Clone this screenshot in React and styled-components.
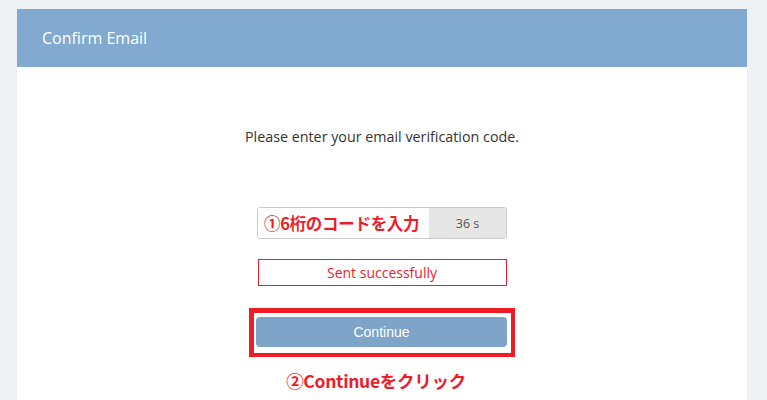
import styled, { createGlobalStyle } from "styled-components";

const GlobalStyle = createGlobalStyle`
  html, body {
    margin: 0;
    padding: 0;
    background: #eef2f5;
  }
  body {
    font-family: "Open Sans", "Noto Sans", sans-serif;
  }
`;

const Page = styled.div`
  padding: 9px 20px 0 17px;
  height: 400px;
  box-sizing: border-box;
  overflow: hidden;
`;

const Card = styled.section`
  background: #ffffff;
  height: 391px;
`;

const Header = styled.header`
  height: 58px;
  background: #82a9cf;
  display: flex;
  align-items: center;
  padding-left: 25px;
  color: #ffffff;
  font-size: 16px;
`;

const Body = styled.div`
  display: flex;
  flex-direction: column;
  align-items: center;
  padding-top: 60px;
`;

const Prompt = styled.p`
  margin: 0;
  font-size: 14.3px;
  line-height: 20px;
  color: #333333;
`;

const InputGroup = styled.div`
  margin-top: 60px;
  width: 250px;
  height: 32px;
  box-sizing: border-box;
  display: flex;
  border: 1px solid #cccccc;
  border-radius: 3px;
  overflow: hidden;
`;

const Field = styled.div`
  flex: 1;
  display: flex;
  align-items: center;
  padding-left: 6px;
  background: #ffffff;
`;

const Note = styled.span`
  font-family: "Noto Sans CJK JP", "Noto Sans", sans-serif;
  font-weight: 700;
  color: #ec1c2b;
  font-size: ${(p) => p.$size || "16.5px"};
  letter-spacing: -0.3px;
  white-space: nowrap;
`;

const Addon = styled.div`
  width: 77px;
  display: flex;
  align-items: center;
  justify-content: center;
  background: #e6e6e6;
  color: #555555;
  font-size: 12.5px;
`;

const Status = styled.div`
  margin-top: 20px;
  width: 249px;
  height: 27px;
  box-sizing: border-box;
  border: 1px solid #ec1c2b;
  color: #ec1c2b;
  font-size: 14px;
  display: flex;
  align-items: center;
  justify-content: center;
`;

const Highlight = styled.div`
  margin-top: 22px;
  width: 266px;
  height: 49px;
  box-sizing: border-box;
  border: 4px solid #ee1c25;
  border-left-width: 5px;
  border-top-width: 5px;
  padding: 4px 4px 0 2px;
`;

const Button = styled.button`
  width: 251px;
  height: 30px;
  border: none;
  border-radius: 4px;
  background: #7fa4c9;
  color: #ffffff;
  font-family: "Liberation Sans", Arial, sans-serif;
  font-size: 14px;
  padding: 0;
  cursor: pointer;
`;

const Caption = styled.div`
  margin-top: 11px;
  margin-left: -12px;
`;

export default function App() {
  return (
    <Page>
      <GlobalStyle />
      <Card>
        <Header>Confirm Email</Header>
        <Body>
          <Prompt>Please enter your email verification code.</Prompt>
          <InputGroup>
            <Field>
              <Note>①6桁のコードを入力</Note>
            </Field>
            <Addon>36 s</Addon>
          </InputGroup>
          <Status>Sent successfully</Status>
          <Highlight>
            <Button>Continue</Button>
          </Highlight>
          <Caption>
            <Note $size="17.5px">②Continueをクリック</Note>
          </Caption>
        </Body>
      </Card>
    </Page>
  );
}
